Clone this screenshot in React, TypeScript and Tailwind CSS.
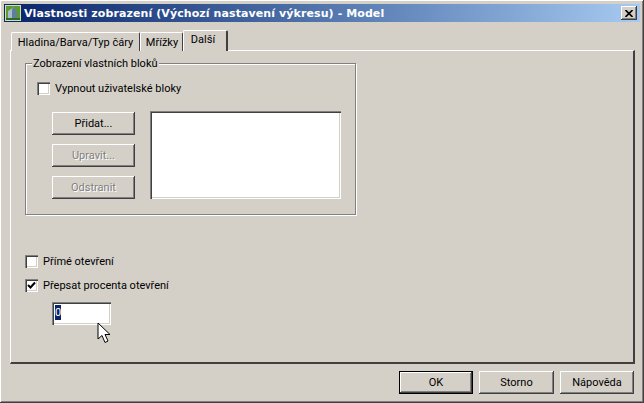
import React from "react";

const raised = "bg-[#d4d0c8] shadow-[inset_-1px_-1px_0_#404040,inset_1px_1px_0_#ffffff,inset_-2px_-2px_0_#808080]";
const sunken = "bg-white shadow-[inset_1px_1px_0_#808080,inset_2px_2px_0_#404040,inset_-1px_-1px_0_#ffffff,inset_-2px_-2px_0_#d4d0c8]";
const ui = "font-['Roboto',sans-serif] text-[11px] leading-[13px] text-black";

function Check({ checked, label }: { checked?: boolean; label: string }) {
  return (
    <div className="flex items-center h-[13px] gap-[5px] whitespace-nowrap">
      <div className={`w-[13px] h-[13px] ${sunken} flex items-center justify-center`}>
        {checked && (
          <svg width="9" height="9" viewBox="0 0 9 9">
            <path d="M1 4 L3.5 6.5 L8 1.5" fill="none" stroke="#000" strokeWidth="2" />
          </svg>
        )}
      </div>
      <span>{label}</span>
    </div>
  );
}

function Btn({ label, disabled, cls }: { label: string; disabled?: boolean; cls?: string }) {
  return (
    <div
      className={`${raised} h-[23px] flex items-center justify-center ${cls ?? "w-[83px]"} ${
        disabled ? "text-[#808080] [text-shadow:1px_1px_0_#ffffff]" : ""
      }`}
    >
      {label}
    </div>
  );
}

function Tab({ label, active, cls }: { label: string; active?: boolean; cls: string }) {
  return (
    <div
      className={`${cls} flex items-center justify-center whitespace-nowrap bg-[#d4d0c8] rounded-t-[2px] ${
        active
          ? "h-[21px] z-10 border-t border-l border-white border-r-2 border-r-[#404040] pb-[3px] pr-[4px]"
          : "h-[19px] border-t border-l border-white border-r border-r-[#404040]"
      }`}
    >
      {label}
    </div>
  );
}

export default function App() {
  return (
    <div className={`${ui} w-[644px] h-[403px] bg-[#d4d0c8] p-1 flex flex-col overflow-hidden shadow-[inset_-1px_-1px_0_#404040,inset_1px_1px_0_#ffffff,inset_-2px_-2px_0_#808080]`}>
      <div className="h-[18px] shrink-0 flex items-center pl-[1px] pr-[3px] bg-gradient-to-r from-[#0a246a] to-[#a6caf0]">
        <svg width="16" height="16" viewBox="0 0 16 16" className="shrink-0">
          <rect width="16" height="16" fill="#cfe0b8" />
          <rect x="1" y="1" width="14" height="14" fill="#5f9a2c" />
          <path d="M3 14V6L9 2V14Z" fill="#a9bccb" />
          <path d="M7 4V14H12V7L9 2Z" fill="#5f7f9f" />
          <rect x="1" y="13" width="14" height="2" fill="#2f6a20" />
        </svg>
        <span className="ml-[3px] font-['DejaVu_Sans',sans-serif] font-bold text-[11px] tracking-[0.09px] text-white whitespace-nowrap">
          Vlastnosti zobrazení (Výchozí nastavení výkresu) - Model
        </span>
        <div className={`${raised} ml-auto w-[16px] h-[14px] flex items-center justify-center`}>
          <svg width="8" height="7" viewBox="0 0 8 7">
            <path d="M0.5 0 L7.5 7 M7.5 0 L0.5 7" stroke="#000" strokeWidth="1.6" />
          </svg>
        </div>
      </div>

      <div className="flex-1 flex flex-col ml-[6px] mr-[5px] pt-[8px]">
        <div className="flex items-end h-[21px] pl-[1px] -mb-[1px] relative">
          <Tab label="Hladina/Barva/Typ čáry" cls="w-[129px]" />
          <Tab label="Mřížky" cls="w-[43px] pl-[1px]" />
          <Tab label="Další" active cls="w-[45px]" />
        </div>
        <div className="h-[314px] pt-[12px] pl-[14px] border-t border-l border-white border-b-2 border-b-[#404040] border-r-2 border-r-[#404040]">
          <div className="relative w-[331px] h-[152px] border border-[#808080] shadow-[1px_1px_0_#ffffff,inset_1px_1px_0_#ffffff] pl-[11px] pt-[18px]">
            <span className="absolute -top-[7px] left-[6px] bg-[#d4d0c8] px-[1px] whitespace-nowrap">
              Zobrazení vlastních bloků
            </span>
            <Check label="Vypnout uživatelské bloky" />
            <div className="flex mt-[16px] ml-[15px] gap-[15px]">
              <div className="flex flex-col pt-[1px] gap-[9px]">
                <Btn label="Přidat..." />
                <Btn label="Upravit..." disabled />
                <Btn label="Odstranit" disabled />
              </div>
              <div className={`${sunken} w-[191px] h-[88px]`} />
            </div>
          </div>
          <div className="mt-[40px] flex flex-col gap-[11px]">
            <Check label="Přímé otevření" />
            <Check checked label="Přepsat procenta otevření" />
          </div>
          <div className={`relative ${sunken} w-[59px] h-[23px] ml-[27px] mt-[10px] pl-[3px] pt-[3px]`}>
            <div className="w-[6px] h-[15px] bg-[#0a246a] text-white flex items-center justify-center">0</div>
            <svg width="15" height="22" viewBox="0 0 15 22" className="absolute left-[45px] top-[20px]">
              <path d="M1 1 V17 L5 13.5 L8 20.5 L11 19 L8 12.5 H13 Z" fill="#fff" stroke="#000" strokeWidth="1" />
            </svg>
          </div>
        </div>
        <div className="flex justify-end gap-[6px] mt-[7px] pr-[1px]">
          <div className="border border-black h-[23px] flex">
            <Btn label="OK" cls="w-[72px] !h-[21px]" />
          </div>
          <Btn label="Storno" cls="w-[75px]" />
          <Btn label="Nápověda" cls="w-[74px]" />
        </div>
      </div>
    </div>
  );
}
